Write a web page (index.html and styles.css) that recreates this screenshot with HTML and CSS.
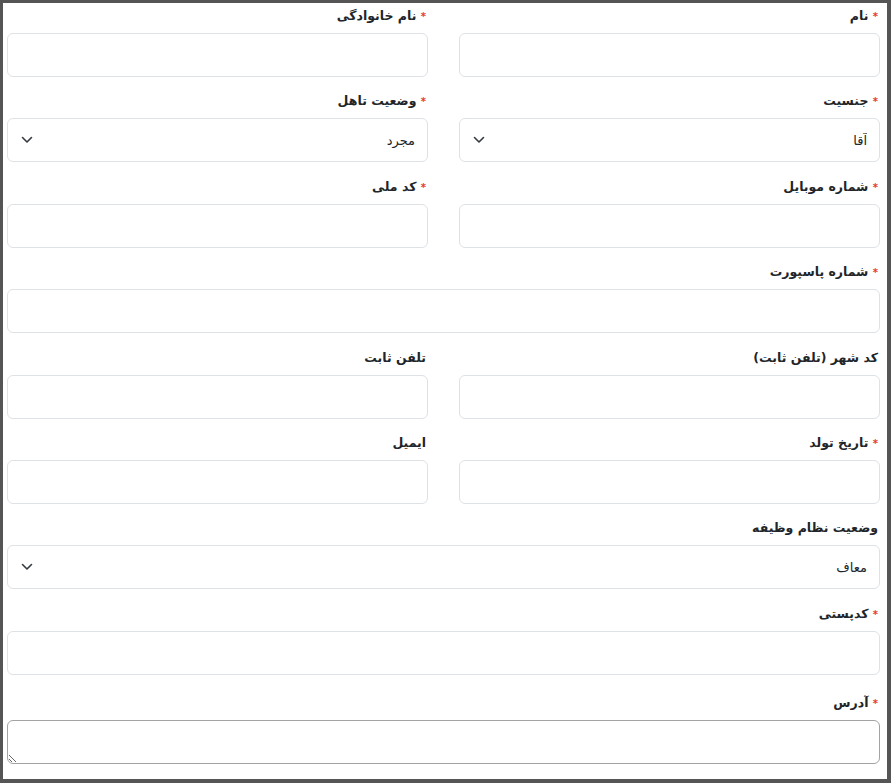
FILE: index.html
```html
<!DOCTYPE html>
<html lang="fa" dir="rtl">
<head>
    <meta charset="UTF-8">
    <meta name="viewport" content="width=device-width, initial-scale=1.0">
    <title>فرم اطلاعات</title>
    <link rel="stylesheet" href="styles.css">
</head>
<body>
    <div class="frame">
        <form class="form">
            <div class="field">
                <label for="first-name"><span class="req">*</span> نام</label>
                <input type="text" id="first-name">
            </div>
            <div class="field">
                <label for="last-name"><span class="req">*</span> نام خانوادگی</label>
                <input type="text" id="last-name">
            </div>

            <div class="field">
                <label for="gender"><span class="req">*</span> جنسیت</label>
                <div class="select-wrap">
                    <select id="gender">
                        <option>آقا</option>
                        <option>خانم</option>
                    </select>
                    <svg class="chevron" width="12" height="8" viewBox="0 0 12 8"><path d="M1.5 1.5 6 6l4.5-4.5" fill="none" stroke="#343a40" stroke-width="1.6" stroke-linecap="round" stroke-linejoin="round"/></svg>
                </div>
            </div>
            <div class="field">
                <label for="marital"><span class="req">*</span> وضعیت تاهل</label>
                <div class="select-wrap">
                    <select id="marital">
                        <option>مجرد</option>
                        <option>متاهل</option>
                    </select>
                    <svg class="chevron" width="12" height="8" viewBox="0 0 12 8"><path d="M1.5 1.5 6 6l4.5-4.5" fill="none" stroke="#343a40" stroke-width="1.6" stroke-linecap="round" stroke-linejoin="round"/></svg>
                </div>
            </div>

            <div class="field">
                <label for="mobile"><span class="req">*</span> شماره موبایل</label>
                <input type="text" id="mobile">
            </div>
            <div class="field">
                <label for="national-code"><span class="req">*</span> کد ملی</label>
                <input type="text" id="national-code">
            </div>

            <div class="field full">
                <label for="passport"><span class="req">*</span> شماره پاسپورت</label>
                <input type="text" id="passport">
            </div>

            <div class="field">
                <label for="area-code">کد شهر (تلفن ثابت)</label>
                <input type="text" id="area-code">
            </div>
            <div class="field">
                <label for="phone">تلفن ثابت</label>
                <input type="text" id="phone">
            </div>

            <div class="field">
                <label for="birth-date"><span class="req">*</span> تاریخ تولد</label>
                <input type="text" id="birth-date">
            </div>
            <div class="field">
                <label for="email">ایمیل</label>
                <input type="email" id="email">
            </div>

            <div class="field full">
                <label for="military">وضعیت نظام وظیفه</label>
                <div class="select-wrap">
                    <select id="military">
                        <option>معاف</option>
                        <option>پایان خدمت</option>
                    </select>
                    <svg class="chevron" width="12" height="8" viewBox="0 0 12 8"><path d="M1.5 1.5 6 6l4.5-4.5" fill="none" stroke="#343a40" stroke-width="1.6" stroke-linecap="round" stroke-linejoin="round"/></svg>
                </div>
            </div>

            <div class="field full">
                <label for="postal-code"><span class="req">*</span> کدپستی</label>
                <input type="text" id="postal-code">
            </div>

            <div class="field full address">
                <label for="address"><span class="req">*</span> آدرس</label>
                <textarea id="address" rows="1"></textarea>
            </div>
        </form>
    </div>
</body>
</html>
```

FILE: styles.css
```css
* {
    margin: 0;
    padding: 0;
    box-sizing: border-box;
}

html, body {
    height: 100%;
    overflow: hidden;
}

body {
    font-family: "DejaVu Sans", "Noto Sans", sans-serif;
    color: #212529;
    background-color: #fff;
}

.frame {
    height: 100vh;
    border-style: solid;
    border-color: #555;
    border-width: 3px 4px 4px 3px;
    padding: 5px 7px 0 4px;
}

.form {
    display: grid;
    grid-template-columns: 1fr 1fr;
    column-gap: 31px;
    row-gap: 16.4px;
}

.field {
    display: flex;
    flex-direction: column;
}

.field.full {
    grid-column: 1 / -1;
}

.field.address {
    margin-top: 4px;
}

label {
    display: block;
    height: 20px;
    font-size: 12.5px;
    font-weight: bold;
    line-height: 15px;
    margin-bottom: 5px;
    padding-right: 2px;
    color: #212529;
}

.req {
    color: #e53935;
    font-size: 10px;
    line-height: 1;
}

input,
select,
textarea {
    width: 100%;
    height: 44px;
    border: 1px solid #dee2e6;
    border-radius: 6px;
    padding: 0 12px;
    font-family: inherit;
    font-size: 13px;
    color: #212529;
    background-color: #fff;
    outline: none;
}

select {
    appearance: none;
    -webkit-appearance: none;
    padding-left: 36px;
}

textarea {
    border-color: #a3a3a3;
    padding: 8px 12px;
    resize: vertical;
    display: block;
}

.select-wrap {
    position: relative;
}

.chevron {
    position: absolute;
    left: 14px;
    top: 18px;
    pointer-events: none;
}
```
